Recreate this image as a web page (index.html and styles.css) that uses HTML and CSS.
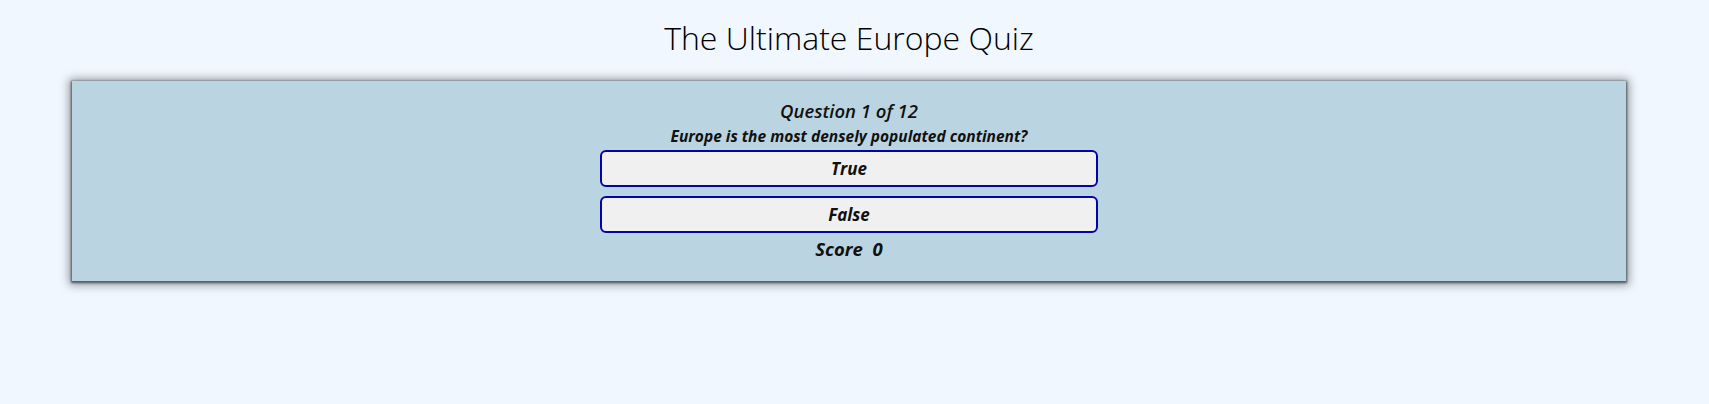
FILE: index.html
```html
<!DOCTYPE html>
<html lang="en">
<head>
<meta charset="utf-8">
<title>The Ultimate Europe Quiz</title>
<link rel="stylesheet" href="styles.css">
</head>
<body>
<div class="page">
  <h1 class="title">The Ultimate Europe Quiz</h1>
  <main class="quiz-box">
    <div class="quiz">
      <h2 class="counter">Question 1 of 12</h2>
      <p class="question">Europe is the most densely populated continent?</p>
      <div class="answers">
        <button class="answer">True</button>
        <button class="answer">False</button>
      </div>
      <p class="score">Score&nbsp; <span>0</span></p>
    </div>
  </main>
</div>
</body>
</html>
```

FILE: styles.css
```css
html, body {
  margin: 0;
  padding: 0;
  background: #f0f7fe;
}

.page {
  padding: 0 11px 40px 0;
  font-family: "Open Sans", "Noto Sans", sans-serif;
}

.title {
  margin: 14px 0 19px;
  font-family: "Open Sans", sans-serif;
  font-weight: 300;
  font-size: 32px;
  line-height: 48px;
  text-align: center;
  color: #000;
}

.quiz-box {
  margin: 0 72px;
  height: 200px;
  box-sizing: border-box;
  background: #bad5e1;
  box-shadow: 0 1px 2px 1px #4f5b65, 0 1px 9px 3px rgba(0, 0, 0, 0.38);
  padding: 17px 0 0;
}

.quiz {
  width: 498px;
  margin: 0 auto;
  display: flex;
  flex-direction: column;
  align-items: center;
  font-style: italic;
  color: #111;
}

.counter {
  margin: 0 0 2px;
  font-size: 18.5px;
  font-weight: 600;
  line-height: 25px;
}

.question {
  margin: 1px 0 3px;
  font-size: 15.5px;
  font-weight: 700;
  line-height: 21px;
}

.answers {
  width: 100%;
  display: flex;
  flex-direction: column;
  gap: 9px;
}

.answer {
  height: 37px;
  width: 100%;
  box-sizing: border-box;
  border: 2px solid #0303a6;
  border-radius: 6px;
  background: #f0f0f0;
  font-family: "Open Sans", sans-serif;
  font-style: italic;
  font-weight: 700;
  font-size: 17px;
  color: #111;
  padding: 0;
}

.score {
  margin: 3px 0 0;
  font-size: 18.5px;
  font-weight: 700;
  line-height: 26px;
  white-space: pre;
}
```
